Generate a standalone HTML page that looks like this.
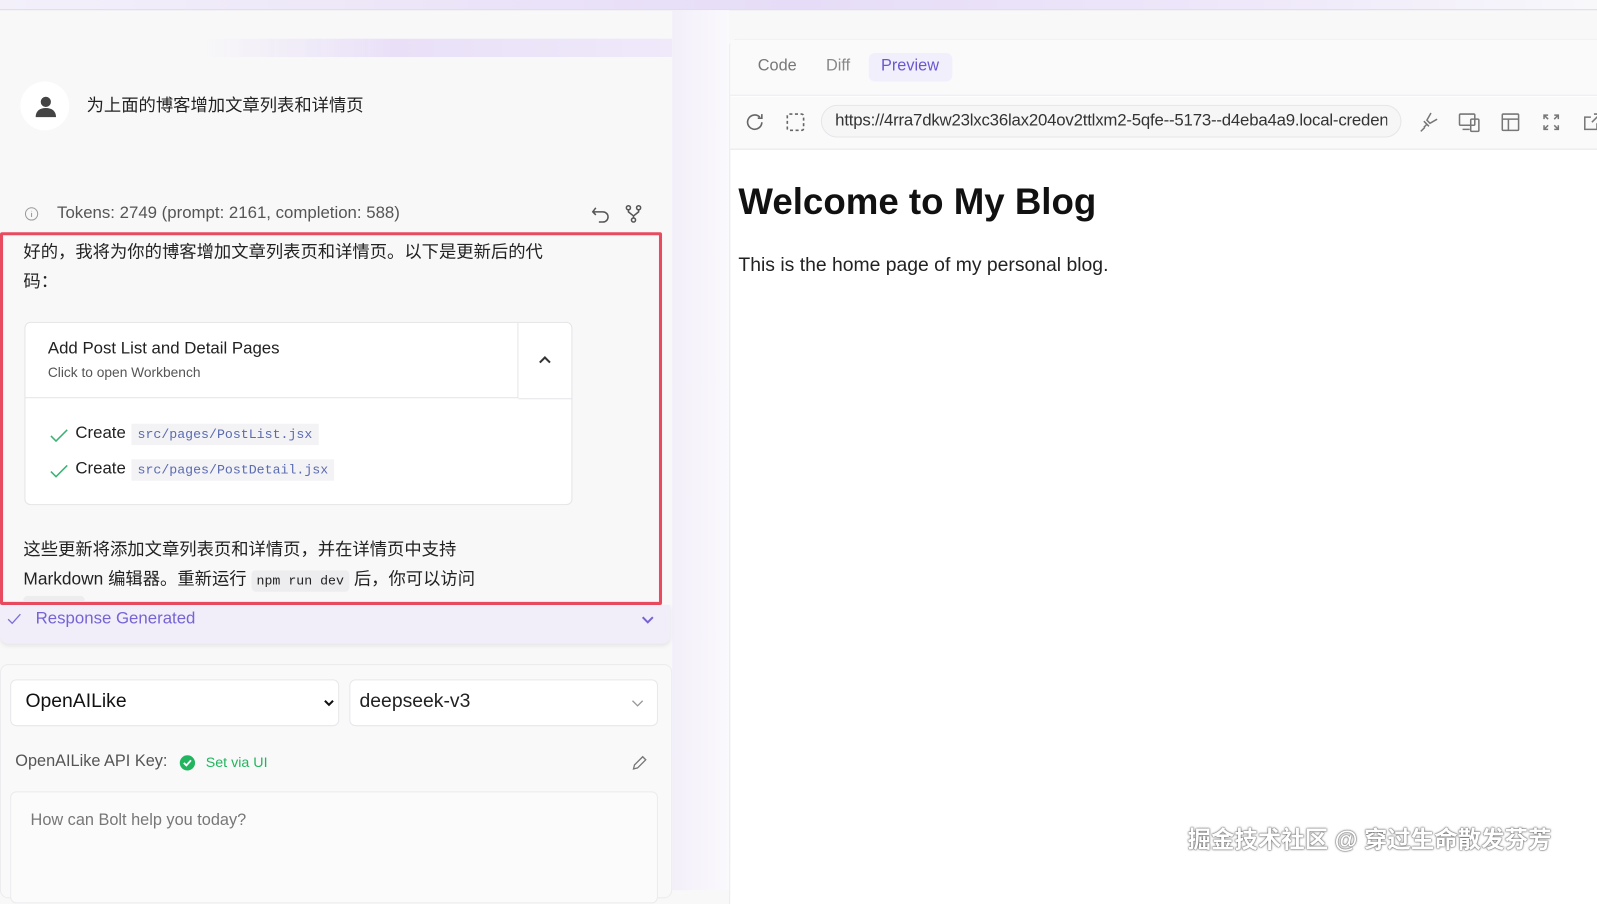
<!DOCTYPE html>
<html><head><meta charset="utf-8"><style>
*{box-sizing:border-box;margin:0;padding:0}
html,body{width:1597px;height:874px;overflow:hidden;background:#f8f8f9}
body{font-family:"Liberation Sans","Noto Sans CJK SC",sans-serif;color:#222}
#w{position:absolute;left:0;top:0;width:1568px;height:860px;transform:scale(1.0185);transform-origin:0 0}
.topgrad{position:absolute;left:0;top:0;width:1568px;height:10px;background:linear-gradient(90deg,#f3f0fa,#e6dcf7 50%,#efe9fa 80%,#f8f8fb);border-bottom:1px solid #ddd}
.band{position:absolute;left:200px;top:38px;width:460px;height:18px;background:linear-gradient(90deg,rgba(230,220,247,0),#e9e0f7 40%,#efe9fa)}
.abs{position:absolute}
.cjk{font-family:"Liberation Sans","Noto Sans CJK SC",sans-serif}
.mono{font-family:"Liberation Mono",monospace}
</style></head><body><div id="w">
<div class="topgrad"></div>
<div class="band"></div>
<div class="abs" style="left:660px;top:10px;width:56px;height:864px;background:linear-gradient(90deg,#f3effa,#faf9fc)"></div>
<div class="abs" style="left:20px;top:80px;width:48px;height:48px;border-radius:50%;background:#fff"></div>
<svg class="abs" style="left:33px;top:92px" width="24" height="24" viewBox="0 0 24 24"><circle cx="12" cy="8" r="5" fill="#444"/><path d="M2 23c0-6 4-9 10-9s10 3 10 9z" fill="#444"/></svg>
<div class="abs cjk" style="left:85px;top:89px;font-size:17px;color:#222">为上面的博客增加文章列表和详情页</div>
<svg class="abs" style="left:24px;top:203px" width="14" height="14" viewBox="0 0 14 14"><circle cx="7" cy="7" r="6" fill="none" stroke="#999"/><path d="M7 6v4M7 4v.5" stroke="#999"/></svg>
<div class="abs" style="left:56px;top:200px;font-size:16.5px;color:#555">Tokens: 2749 (prompt: 2161, completion: 588)</div>
<svg class="abs" style="left:580px;top:200px" width="20" height="20" viewBox="0 0 20 20" fill="none" stroke="#555" stroke-width="1.5"><path d="M5 4L2 8l3 3M2 8h10a5 5 0 010 10H8"/></svg>
<svg class="abs" style="left:612px;top:200px" width="20" height="20" viewBox="0 0 20 20" fill="none" stroke="#555" stroke-width="1.5"><circle cx="5" cy="4" r="2"/><circle cx="15" cy="4" r="2"/><circle cx="10" cy="16" r="2"/><path d="M5 6v2l5 4 5-4V6M10 12v2"/></svg>
<div class="abs" style="left:0;top:228px;width:650px;height:366px;border:3px solid #e84a5f;border-radius:2px;overflow:hidden">
 <div class="abs cjk" style="left:20px;top:2px;width:525px;font-size:17px;line-height:29px;color:#222">好的，我将为你的博客增加文章列表页和详情页。以下是更新后的代码：</div>
 <div class="abs" style="left:21px;top:85px;width:538px;height:180px;background:#fff;border:1px solid #e5e5e8;border-radius:6px">
  <div class="abs" style="left:0;top:0;width:484px;height:74px;border-right:1px solid #e5e5e8;border-bottom:1px solid #e5e5e8"></div>
  <div class="abs" style="left:484px;top:74px;width:53px;height:1px;background:#e5e5e8"></div>
  <div class="abs" style="left:22px;top:16px;font-size:16.5px;color:#222">Add Post List and Detail Pages</div>
  <div class="abs" style="left:22px;top:41px;font-size:13.5px;color:#555">Click to open Workbench</div>
  <svg class="abs" style="left:502px;top:30px" width="16" height="12" viewBox="0 0 16 12" fill="none" stroke="#333" stroke-width="2"><path d="M3 9l5-5 5 5"/></svg>
  <svg class="abs" style="left:24px;top:104px" width="18" height="14" viewBox="0 0 18 14" fill="none" stroke="#3bb273" stroke-width="1.5"><path d="M1 7l5 5L17 1"/></svg>
  <div class="abs" style="left:49px;top:99px;font-size:16.5px;color:#222">Create</div>
  <div class="abs mono" style="left:104px;top:99px;padding:3px 6px;background:#f3f3f5;color:#5b6bb0;font-size:13px">src/pages/PostList.jsx</div>
  <svg class="abs" style="left:24px;top:139px" width="18" height="14" viewBox="0 0 18 14" fill="none" stroke="#3bb273" stroke-width="1.5"><path d="M1 7l5 5L17 1"/></svg>
  <div class="abs" style="left:49px;top:134px;font-size:16.5px;color:#222">Create</div>
  <div class="abs mono" style="left:104px;top:134px;padding:3px 6px;background:#f3f3f5;color:#5b6bb0;font-size:13px">src/pages/PostDetail.jsx</div>
 </div>
 <div class="abs cjk" style="left:20px;top:294px;width:600px;font-size:17px;line-height:29px;color:#222">这些更新将添加文章列表页和详情页，并在详情页中支持<br>Markdown 编辑器。重新运行 <span class="mono" style="font-size:13px;background:#ededf0;padding:3px 5px;border-radius:4px">npm run dev</span> 后，你可以访问</div>
 <div class="abs" style="left:20px;top:354px;width:60px;height:12px;background:#ededf0;border-radius:4px"></div>
</div>
<div class="abs" style="left:0;top:594px;width:658px;height:38px;background:#f1eefa;border-radius:0 0 8px 8px;box-shadow:0 2px 4px rgba(0,0,0,.08)"></div>
<svg class="abs" style="left:7px;top:602px" width="14" height="12" viewBox="0 0 14 12" fill="none" stroke="#7c6fd6" stroke-width="1.3"><path d="M1 6l4 4 8-9"/></svg>
<div class="abs" style="left:35px;top:598px;font-size:16.5px;color:#7764d4">Response Generated</div>
<svg class="abs" style="left:628px;top:603px" width="16" height="12" viewBox="0 0 16 12" fill="none" stroke="#7764d4" stroke-width="2"><path d="M3 3l5 5 5-5"/></svg>
<div class="abs" style="left:0;top:652px;width:660px;height:230px;background:#f9f9fa;border:1px solid #ececef;border-radius:8px"></div>
<div class="abs" style="left:10px;top:667px;width:323px;height:46px;background:#fff;border:1px solid #e8e8ec;border-radius:6px"></div>
<div class="abs" style="left:25px;top:678px;font-size:19px;color:#111">OpenAILike</div>
<svg class="abs" style="left:317px;top:685px" width="12" height="10" viewBox="0 0 12 10" fill="none" stroke="#111" stroke-width="2"><path d="M2 3l4 4 4-4"/></svg>
<div class="abs" style="left:343px;top:667px;width:303px;height:46px;background:#fff;border:1px solid #e8e8ec;border-radius:6px"></div>
<div class="abs" style="left:353px;top:678px;font-size:19px;color:#222">deepseek-v3</div>
<svg class="abs" style="left:619px;top:685px" width="14" height="10" viewBox="0 0 14 10" fill="none" stroke="#999" stroke-width="1.3"><path d="M2 3l5 5 5-5"/></svg>
<div class="abs" style="left:15px;top:739px;font-size:16px;color:#555">OpenAILike API Key:</div>
<svg class="abs" style="left:176px;top:741px" width="16" height="16" viewBox="0 0 16 16"><circle cx="8" cy="8" r="7.5" fill="#22b55f"/><path d="M4.5 8l2.5 2.5 4.5-5" fill="none" stroke="#fff" stroke-width="1.8"/></svg>
<div class="abs" style="left:202px;top:740px;font-size:14px;color:#22b55f">Set via UI</div>
<svg class="abs" style="left:619px;top:740px" width="18" height="18" viewBox="0 0 18 18" fill="none" stroke="#777" stroke-width="1.3"><path d="M3 15l1-4 8-8 3 3-8 8z"/></svg>
<div class="abs" style="left:10px;top:777px;width:636px;height:110px;background:#fbfbfc;border:1px solid #ebebee;border-radius:6px"></div>
<div class="abs" style="left:30px;top:797px;font-size:16px;color:#777">How can Bolt help you today?</div>
<div class="abs" style="left:716px;top:38px;width:900px;height:850px;background:#fff;border-left:1px solid #e6e6ea;border-top:1px solid #ececef;border-radius:8px 0 0 0"></div>
<div class="abs" style="left:717px;top:39px;width:880px;height:55px;background:#fafafb;border-bottom:1px solid #ececef"></div>
<div class="abs" style="left:744px;top:56px;font-size:16px;color:#777">Code</div>
<div class="abs" style="left:811px;top:56px;font-size:16px;color:#888">Diff</div>
<div class="abs" style="left:853px;top:52px;width:82px;height:28px;background:#f1effb;border-radius:6px"></div>
<div class="abs" style="left:865px;top:56px;font-size:16px;color:#6b58d0">Preview</div>
<div class="abs" style="left:717px;top:95px;width:880px;height:52px;background:#fafafb;border-bottom:1px solid #e8e8ec"></div>
<svg class="abs" style="left:730px;top:109px" width="22" height="22" viewBox="0 0 22 22" fill="none" stroke="#666" stroke-width="1.6"><path d="M18 11a7 7 0 11-2-5M18 3v4h-4"/></svg>
<svg class="abs" style="left:771px;top:110px" width="20" height="20" viewBox="0 0 20 20" fill="none" stroke="#666" stroke-width="1.6" stroke-dasharray="3 2.5"><rect x="2" y="2" width="16" height="16" rx="2"/></svg>
<div class="abs" style="left:806px;top:103px;width:570px;height:32px;background:#f6f6f7;border:1px solid #e6e6ea;border-radius:16px;overflow:hidden"></div>
<div class="abs" style="left:820px;top:109px;width:542px;overflow:hidden;white-space:nowrap;font-size:16.5px;letter-spacing:-0.2px;color:#333">https://4rra7dkw23lxc36lax204ov2ttlxm2-5qfe--5173--d4eba4a9.local-credentialless</div>
<svg class="abs" style="left:1391px;top:109px" width="22" height="22" viewBox="0 0 22 22" fill="none" stroke="#777" stroke-width="1.5"><path d="M4 20l4-4M7 10l5 5M14 2l-4 7 3 3 7-4M10 13l-3 3"/></svg>
<svg class="abs" style="left:1431px;top:109px" width="24" height="22" viewBox="0 0 24 22" fill="none" stroke="#777" stroke-width="1.5"><rect x="2" y="3" width="15" height="11" rx="1"/><rect x="13" y="8" width="8" height="12" rx="1"/><path d="M5 18h7"/></svg>
<svg class="abs" style="left:1473px;top:110px" width="20" height="20" viewBox="0 0 20 20" fill="none" stroke="#777" stroke-width="1.5"><rect x="2" y="2" width="16" height="16" rx="1"/><path d="M2 7h16M8 7v11"/></svg>
<svg class="abs" style="left:1513px;top:110px" width="20" height="20" viewBox="0 0 20 20" fill="none" stroke="#777" stroke-width="1.5"><path d="M3 7V3h4M13 3h4v4M17 13v4h-4M7 17H3v-4M3 3l4 4M17 3l-4 4M17 17l-4-4M3 17l4-4"/></svg>
<svg class="abs" style="left:1553px;top:110px" width="20" height="20" viewBox="0 0 20 20" fill="none" stroke="#777" stroke-width="1.5"><path d="M15 11v6H3V5h6M12 2h6v6M18 2l-8 8"/></svg>
<div class="abs" style="left:725px;top:177px;font-size:36px;font-weight:bold;color:#111">Welcome to My Blog</div>
<div class="abs" style="left:725px;top:250px;font-size:19px;color:#222">This is the home page of my personal blog.</div>
<div class="abs cjk" style="left:1166px;top:805px;font-size:23px;color:#fff;font-weight:bold;text-shadow:0 0 2px #555,0 0 1px #333">掘金技术社区 @ 穿过生命散发芬芳</div>
</div></body></html>
